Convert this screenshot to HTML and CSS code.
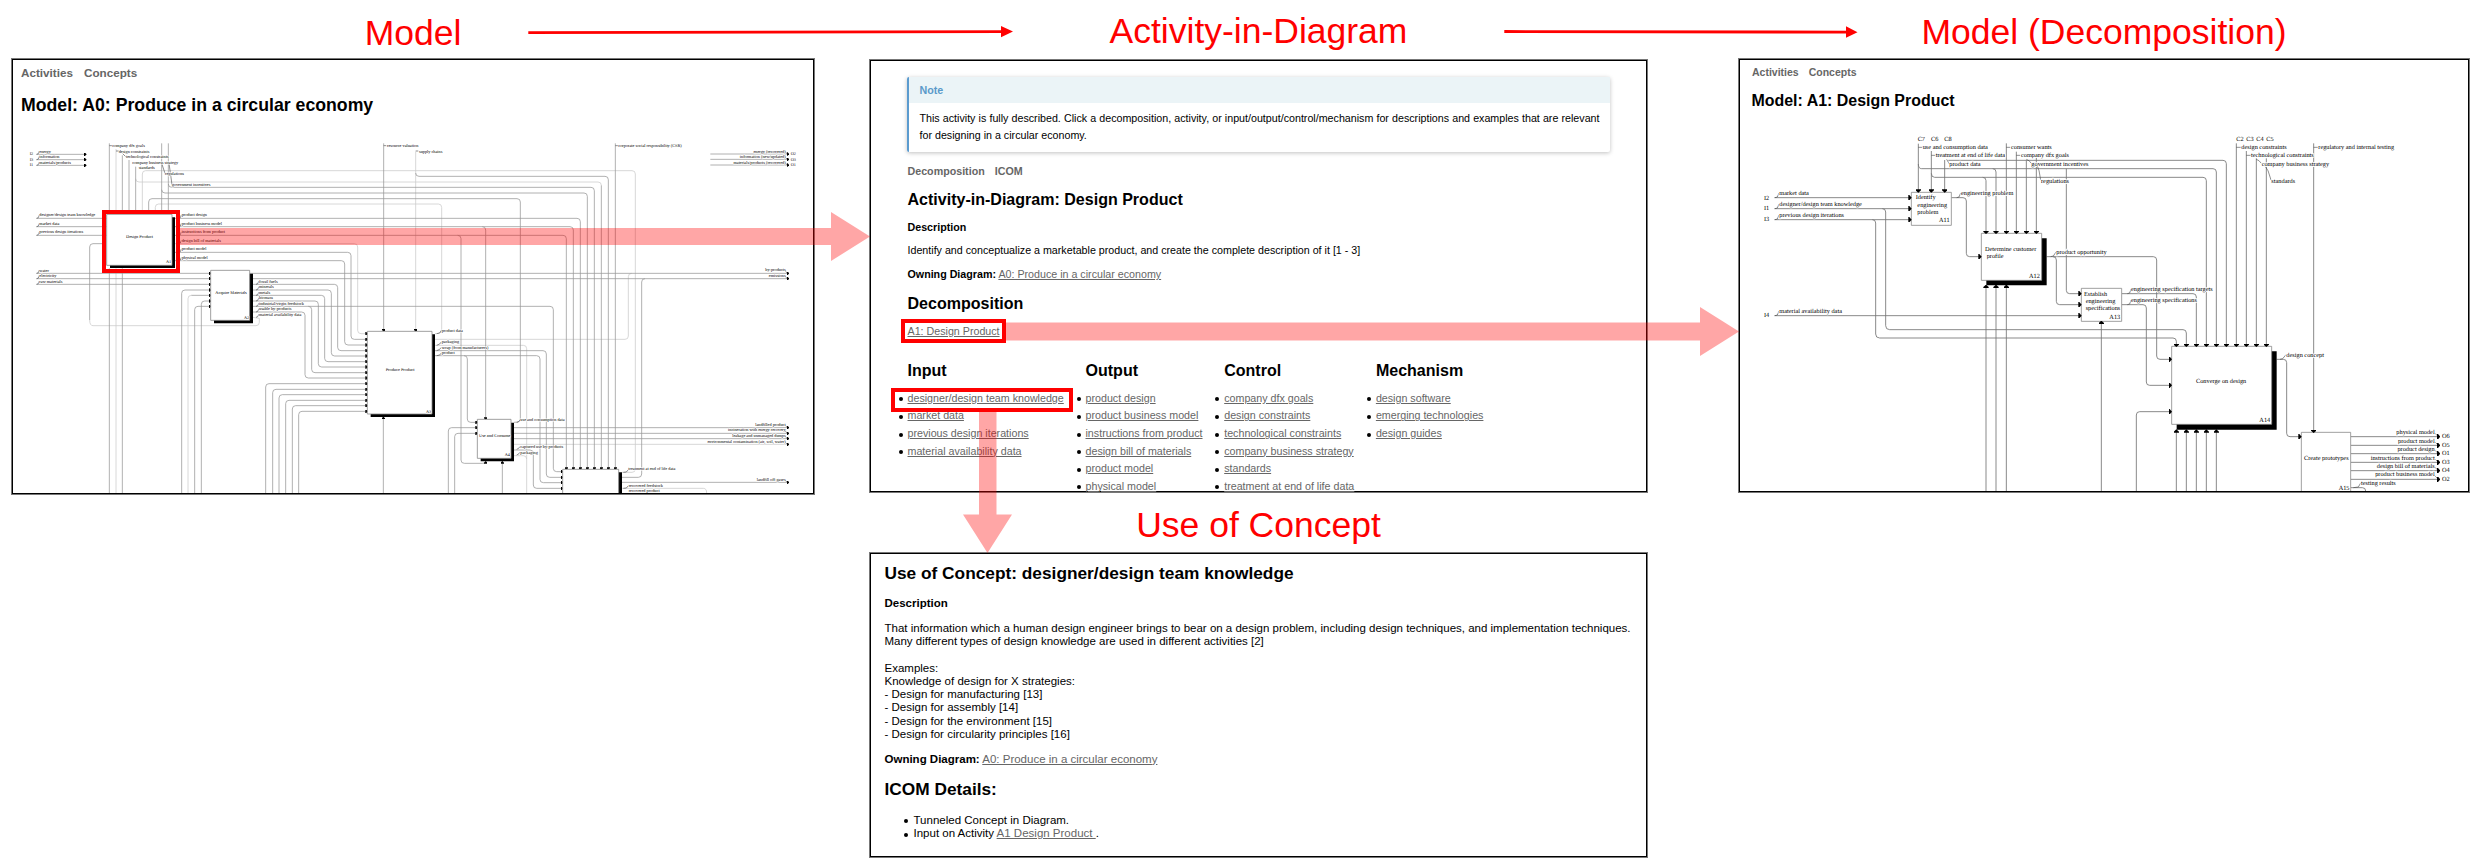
FILE: index.html
```html
<!DOCTYPE html>
<html lang="en">
<head>
<meta charset="utf-8">
<title>Model navigation</title>
<link rel="stylesheet" href="styles.css">
</head>
<body>
<main class="flow">
  <section class="col col-model">
    <h1 class="title">Model</h1>
    <div class="panel">
      <nav class="nav"><a>Activities</a><a>Concepts</a></nav>
      <h2 class="heading">Model: A0: Produce in a circular economy</h2>
      <svg class="diagram a0" viewBox="39 345 2400 1134">
        <defs>
          <marker id="h0" viewBox="0 0 8 10" refX="8" refY="5" markerWidth="8" markerHeight="10" markerUnits="userSpaceOnUse" orient="auto"><path class="solid" d="M0 0H3L8 5L3 10H0Z"/></marker>
        </defs>
        <g class="wire faint">
          <path d="M348 447V640M348 805V1479M1247 455V993"/>
          <path d="M427 640V522Q427 512 437 512H1896Q1906 512 1906 522V1407Q1906 1417 1896 1417H1866"/>
          <path d="M407 536Q407 546 417 546H1794Q1804 546 1804 556"/>
          <path d="M466 640V622Q466 612 476 612H1315Q1325 612 1325 622V991Q1325 1001 1305 1001"/>
          <path d="M1305 1018H1875Q1885 1018 1885 1008V830Q1885 820 1895 820"/>
          <path d="M1305 1036H1570Q1580 1036 1580 1046V1479"/>
          <path d="M1542 1367H1570Q1580 1367 1580 1377M1542 1333H2362"/>
          <path d="M269 960Q269 977 279 977H768Q778 977 778 967V955L758 952"/>
          <path d="M525 731H1063Q1073 731 1073 741V991Q1073 1001 1083 1001H1102"/>
          <path d="M564 1479V896Q564 886 574 886M1866 1465H2110Q2120 1465 2120 1479"/>
        </g>
        <g class="wire">
          <path d="M328 430V640M328 805V1479M367 466V640M367 805V1479M387 480V640M407 500V640M485 430V640M505 430V640M1151 430V993M1846 430V1405"/>
          <path d="M446 640V606Q446 596 456 596H1551Q1561 596 1561 606V1257Q1561 1267 1542 1267"/>
          <path d="M485 569Q485 579 495 579H1752Q1762 579 1762 589V1405"/>
          <path d="M505 552Q505 562 515 562H1773Q1783 562 1783 572V1405"/>
          <path d="M1247 519Q1247 529 1257 529H1815Q1825 529 1825 539V1405M1804 556V1405"/>
          <path d="M525 655H1731Q1741 655 1741 665V1405M525 680H1710Q1720 680 1720 690V1405M1447 680Q1457 680 1457 690V1258"/>
          <path d="M525 706H1689Q1699 706 1699 716V1405M1373 706Q1383 706 1383 716V1380Q1383 1390 1393 1390H1447Q1457 1390 1457 1386"/>
          <path d="M525 757H1043Q1053 757 1053 767V1008Q1053 1018 1063 1018H1102M525 782H1024Q1034 782 1034 792V1025Q1034 1035 1044 1035H1102"/>
          <path d="M306 731H279Q269 731 269 741V960M109 655H320M109 680H320M109 706H320"/>
          <path d="M749 820H2365M749 836H2365"/>
          <path d="M758 853H1003Q1013 853 1013 863V1042Q1013 1052 1023 1052H1102M758 870H984Q994 870 994 880V1058Q994 1068 1004 1068H1102M758 886H964Q974 886 974 896V1075Q974 1085 984 1085H1102M758 903H945Q955 903 955 913V1091Q955 1101 965 1101H1102M925 919Q935 919 935 929V1108Q935 1118 945 1118H1102M758 936H905Q915 936 915 946V1124Q915 1134 925 1134H1102"/>
          <path d="M758 919H1650Q1660 919 1660 929V1405Q1660 1415 1670 1415H1688"/>
          <path d="M1305 1052H1629Q1639 1052 1639 1062V1422Q1639 1432 1649 1432H1688M1305 1067H1610Q1620 1067 1620 1077V1438Q1620 1448 1630 1448H1688M1392 1067Q1402 1067 1402 1077V1257Q1402 1267 1412 1267H1432"/>
          <path d="M1542 1350H1590Q1600 1350 1600 1360V1455Q1600 1465 1610 1465H1688"/>
          <path d="M1542 1283H2362M1542 1300H2362M1542 1316H2362M1866 1447H2362M1866 1432H1915Q1925 1432 1925 1422V846Q1925 836 1935 836"/>
          <path d="M1150 1479V1251M1507 1479V1384M2131 462H2362M2131 478H2362M2131 495H2362"/>
          <path d="M545 1479V880Q545 870 555 870H632M574 886H632M584 1479V929Q584 919 594 919H632M604 1479V913Q604 903 614 903H632"/>
          <path d="M797 1479V1161Q797 1151 807 1151H1102M818 1479V1178Q818 1168 828 1168H1102M837 1479V1194Q837 1184 847 1184H1102M857 1479V1211Q857 1201 867 1201H1102M877 1479V1227Q877 1217 887 1217H1102M896 1479V1244Q896 1234 906 1234H1102"/>
          <path d="M1345 1479V1293Q1345 1283 1355 1283H1432M1364 1479V1310Q1364 1300 1374 1300H1432M109 463H255M109 479H255M109 496H255M109 820H632M109 836H632M109 853H632"/>
          <path class="tick" d="M110 463l5-2l3-8M110 479l5-2l3-8M110 496l5-2l3-8M110 655l5-2l3-8M110 680l5-2l3-8M110 706l5-2l3-8M110 820l5-2l3-8M110 836l5-2l3-8M110 853l5-2l3-8M536 655l5-2l3-8M536 680l5-2l3-8M536 706l5-2l3-8M536 731l5-2l3-8M536 757l5-2l3-8M536 782l5-2l3-8M768 853l5-2l4-8M768 870l5-2l4-8M768 886l5-2l4-8M768 903l5-2l4-8M768 919l5-2l4-8M768 936l5-2l4-8M768 952l5-2l4-8M1310 1001l9-2l5-8M1310 1036l9-4l5-6M1310 1052l9-4l5-6M1310 1067l9-2l5-6M1550 1267l5-1l5-6M1550 1348l7-4l4-5M1550 1365l7-4l4-5M328 437h8M348 453h8M367 460l10 10M485 490l10 30M507 490l9 64M1151 437h8M1247 453h8M1846 437h8M2354 453l8 9M2354 470l8 8M2354 487l8 8M2354 811l8 9M2354 828l8 8M2354 1274l8 9M2354 1291l8 9M2354 1308l8 8M2354 1325l8 8M2354 1440l8 7M1870 1417l9-1l6-7M1870 1465l9-1l6-7"/>
        </g>
        <g class="heads">
          <path class="hd" d="M250 463h10"/><path class="hd" d="M250 479h10"/><path class="hd" d="M250 496h10"/>
          <path class="hd" d="M624 820h10"/><path class="hd" d="M624 836h10"/><path class="hd" d="M624 853h10"/><path class="hd" d="M624 870h10"/><path class="hd" d="M624 886h10"/><path class="hd" d="M624 903h10"/><path class="hd" d="M624 919h10"/>
          <path class="hd" d="M1094 1001h10"/><path class="hd" d="M1094 1018h10"/><path class="hd" d="M1094 1035h10"/><path class="hd" d="M1094 1052h10"/><path class="hd" d="M1094 1068h10"/><path class="hd" d="M1094 1085h10"/><path class="hd" d="M1094 1101h10"/><path class="hd" d="M1094 1118h10"/><path class="hd" d="M1094 1134h10"/><path class="hd" d="M1094 1151h10"/><path class="hd" d="M1094 1168h10"/><path class="hd" d="M1094 1184h10"/><path class="hd" d="M1094 1201h10"/><path class="hd" d="M1094 1217h10"/><path class="hd" d="M1094 1234h10"/>
          <path class="hd" d="M1424 1267h10"/><path class="hd" d="M1424 1283h10"/><path class="hd" d="M1424 1300h10"/>
          <path class="hd" d="M1680 1415h10"/><path class="hd" d="M1680 1432h10"/><path class="hd" d="M1680 1448h10"/><path class="hd" d="M1680 1465h10"/>
          <path class="hd" d="M1151 985v10"/><path class="hd" d="M1247 985v10"/><path class="hd" d="M1457 1250v10"/>
          <path class="hd" d="M1150 1262v-12"/><path class="hd" d="M1457 1394v-11"/><path class="hd" d="M1507 1394v-11"/>
          <path class="hd" d="M1699 1400v10"/><path class="hd" d="M1720 1400v10"/><path class="hd" d="M1741 1400v10"/><path class="hd" d="M1762 1400v10"/><path class="hd" d="M1783 1400v10"/><path class="hd" d="M1804 1400v10"/><path class="hd" d="M1825 1400v10"/><path class="hd" d="M1846 1400v10"/>
          <path class="hd" d="M2358 462h10"/><path class="hd" d="M2358 478h10"/><path class="hd" d="M2358 495h10"/><path class="hd" d="M2358 820h10"/><path class="hd" d="M2358 836h10"/><path class="hd" d="M2358 1283h10"/><path class="hd" d="M2358 1300h10"/><path class="hd" d="M2358 1316h10"/><path class="hd" d="M2358 1333h10"/><path class="hd" d="M2358 1447h10"/>
        </g>
        <path class="solid" d="M330 652H525V804H330ZM642 821H759V970H642ZM1112 1003H1305V1251H1112ZM1442 1268H1542V1384H1442ZM1698 1417H1866V1500H1698Z"/>
        <path class="box" d="M320 643H516V796H320ZM632 811H749V961H632ZM1102 994H1296V1242H1102ZM1432 1258H1533V1375H1432ZM1688 1408H1856V1500H1688Z"/>
        <g class="labels">
          <text x="89" y="466">I2</text><text x="89" y="482">I3</text><text x="89" y="498">I1</text>
          <text x="118" y="458">energy</text><text x="118" y="474">information</text><text x="118" y="491">materials/products</text>
          <text x="337" y="441">company dfx goals</text><text x="356" y="458">design constraints</text><text x="378" y="474">technological constraints</text><text x="397" y="491">company business strategy</text><text x="416" y="507">standards</text><text x="495" y="524">regulations</text><text x="515" y="557">government incentives</text>
          <text x="118" y="649">designer/design team knowledge</text><text x="118" y="675">market data</text><text x="118" y="700">previous design iterations</text>
          <text x="545" y="649">product design</text><text x="545" y="675">product business model</text><text x="545" y="700">instructions from product</text><text x="545" y="726">design bill of materials</text><text x="545" y="751">product model</text><text x="545" y="777">physical model</text>
          <text x="118" y="815">water</text><text x="118" y="831">electricity</text><text x="118" y="848">raw materials</text>
          <text x="777" y="848">fossil fuels</text><text x="777" y="864">minerals</text><text x="777" y="881">metals</text><text x="777" y="897">biomass</text><text x="777" y="914">industrial/virgin feedstock</text><text x="777" y="930">usable by-products</text><text x="777" y="947">material availability data</text>
          <text x="1161" y="441">resource valuation</text><text x="1257" y="458">supply chains</text><text x="1855" y="441">corporate social responsibility (CSR)</text>
          <text x="1325" y="996">product data</text><text x="1325" y="1030">packaging</text><text x="1325" y="1046">scrap (from manufacturers)</text><text x="1325" y="1063">product</text>
          <text x="1561" y="1262">use and consumption data</text><text x="1561" y="1345">captured use by-products</text><text x="1561" y="1361">packaging</text>
          <text x="1885" y="1410">treatment at end of life data</text><text x="1886" y="1460">recovered feedstock</text><text x="1886" y="1476">recovered product</text>
          <text x="378" y="715" class="name">Design Product</text><text x="498" y="789">A1</text>
          <text x="646" y="882" class="name">Acquire Materials</text><text x="732" y="956">A2</text>
          <text x="1157" y="1114" class="name">Produce Product</text><text x="1278" y="1238">A3</text>
          <text x="1437" y="1312" class="name">Use and Consume</text><text x="1514" y="1369">A4</text>
          <text x="2372" y="466">O2</text><text x="2372" y="482">O3</text><text x="2372" y="498">O1</text>
        </g>
        <g class="labels end">
          <text x="2357" y="458">energy (recovered)</text><text x="2357" y="474">information (new/updated)</text><text x="2357" y="491">materials/products (recovered)</text>
          <text x="2357" y="814">by-products</text><text x="2357" y="831">emissions</text>
          <text x="2357" y="1278">landfilled product</text><text x="2357" y="1294">incineration with energy recovery</text><text x="2357" y="1311">leakage and unmanaged dumps</text><text x="2357" y="1328">environmental contamination (air, soil, water)</text><text x="2357" y="1443">landfill off-gases</text>
        </g>
      </svg>
    </div>
  </section>

  <section class="col col-activity">
    <h1 class="title">Activity-in-Diagram</h1>
    <div class="panel">
      <aside class="note">
        <div class="note-head">Note</div>
        <p class="note-body">This activity is fully described. Click a decomposition, activity, or input/output/control/mechanism for descriptions and examples that are relevant for designing in a circular economy.</p>
      </aside>
      <nav class="nav"><a>Decomposition</a><a>ICOM</a></nav>
      <h2 class="heading">Activity-in-Diagram: Design Product</h2>
      <h3 class="sub">Description</h3>
      <p class="para">Identify and conceptualize a marketable product, and create the complete description of it [1 - 3]</p>
      <p class="para owning"><b>Owning Diagram:</b> <a class="link">A0: Produce in a circular economy</a></p>
      <h2 class="heading">Decomposition</h2>
      <p class="para decomp"><a class="link">A1: Design Product</a></p>
      <div class="icom">
        <div><h2 class="heading">Input</h2><ul><li><a class="link">designer/design team knowledge</a></li><li><a class="link">market data</a></li><li><a class="link">previous design iterations</a></li><li><a class="link">material availability data</a></li></ul></div>
        <div><h2 class="heading">Output</h2><ul><li><a class="link">product design</a></li><li><a class="link">product business model</a></li><li><a class="link">instructions from product</a></li><li><a class="link">design bill of materials</a></li><li><a class="link">product model</a></li><li><a class="link">physical model</a></li></ul></div>
        <div><h2 class="heading">Control</h2><ul><li><a class="link">company dfx goals</a></li><li><a class="link">design constraints</a></li><li><a class="link">technological constraints</a></li><li><a class="link">company business strategy</a></li><li><a class="link">standards</a></li><li><a class="link">treatment at end of life data</a></li></ul></div>
        <div><h2 class="heading">Mechanism</h2><ul><li><a class="link">design software</a></li><li><a class="link">emerging technologies</a></li><li><a class="link">design guides</a></li></ul></div>
      </div>
    </div>
    <h1 class="title title-concept">Use of Concept</h1>
    <div class="panel panel-concept">
      <h2 class="heading">Use of Concept: designer/design team knowledge</h2>
      <h3 class="sub">Description</h3>
      <p class="para text">That information which a human design engineer brings to bear on a design problem, including design techniques, and implementation techniques.<br>Many different types of design knowledge are used in different activities [2]<br><br>Examples:<br>Knowledge of design for X strategies:<br>- Design for manufacturing [13]<br>- Design for assembly [14]<br>- Design for the environment [15]<br>- Design for circularity principles [16]</p>
      <p class="para owner"><b>Owning Diagram:</b> <a class="link">A0: Produce in a circular economy</a></p>
      <h2 class="heading details">ICOM Details:</h2>
      <ul><li>Tunneled Concept in Diagram.</li><li>Input on Activity <a class="link">A1 Design Product&nbsp;</a>.</li></ul>
    </div>
  </section>

  <section class="col col-decomp">
    <h1 class="title">Model (Decomposition)</h1>
    <div class="panel">
      <nav class="nav"><a>Activities</a><a>Concepts</a></nav>
      <h2 class="heading">Model: A1: Design Product</h2>
      <svg class="diagram a1" viewBox="30 -27 2184 1140">
        <defs>
          <marker id="h1" viewBox="0 0 10 16" refX="10" refY="8" markerWidth="10" markerHeight="16" markerUnits="userSpaceOnUse" orient="auto"><path class="solid" d="M0 0H3L10 8L3 16H0Z"/></marker>
        </defs>
        <g class="wire">
          <path d="M565 71V216M604 93V216M644 120V216M829 70V340M859 95V340M919 105V340"/>
          <path d="M565 132Q565 146 575 146H1449Q1459 146 1459 156V679M788 146Q798 146 798 156V340"/>
          <path d="M604 160Q604 172 614 172H1419Q1429 172 1429 182V679M758 172Q768 172 768 182V340"/>
          <path d="M655 121H1479Q1489 121 1489 131V679M889 121V340M1009 146V511Q1009 521 1019 521H1054"/>
          <path d="M133 233H544M133 266H544M133 299H544M133 587H1054"/>
          <path d="M457 266Q467 266 467 276V617Q467 629 479 629H1359Q1369 629 1369 639V679"/>
          <path d="M427 299Q437 299 437 309V642Q437 654 449 654H1329Q1339 654 1339 664V679"/>
          <path d="M664 233H699Q709 233 709 243V400Q709 410 719 410H754"/>
          <path d="M768 1113V496M798 1113V496M829 1113V496M1114 1113V604"/>
          <path d="M950 410H1270Q1280 410 1280 420V708Q1280 718 1290 718H1325M969 410Q979 410 979 420V544Q979 554 989 554H1054"/>
          <path d="M1175 521H1389Q1399 521 1399 531V679M1175 554H1239Q1249 554 1249 564V786Q1249 796 1259 796H1325"/>
          <path d="M1219 1113V885Q1219 875 1229 875H1325M1339 1113V929M1369 1113V929M1399 1113V929M1429 1113V929M1459 1113V929"/>
          <path d="M1519 70V679M1549 93V679M1579 115V679M1609 115V679M1751 70V938"/>
          <path d="M1640 718H1660Q1670 718 1670 728V940Q1670 950 1680 950H1714"/>
          <path d="M1862 950H2128M1862 976H2128M1862 1001H2128M1862 1027H2128M1862 1052H2128M1862 1078H2128M1862 1103H1897Q1907 1103 1907 1113"/>
          <path class="tick" d="M135 233l7-2l5-12M135 266l7-2l5-12M135 299l7-2l5-12M135 587l7-2l5-12M680 233l7-2l5-12M962 410l8-2l8-12M1192 521l7-2l4-12M1192 554l7-2l4-12M1650 718l8-2l10-12M1870 1103l15-2l7-12M565 82h12M604 106h12M650 118l8 14M829 82h12M859 106h12M889 118q8 2 15 12M919 130q10 20 13 50M1519 82h14M1549 106h14M1579 118q8 2 15 12M1600 130q17 20 23 50M1751 82h14M2113 938l12 12M2113 964l12 12M2113 989l12 12M2113 1015l12 12M2113 1040l12 12M2113 1066l12 12"/>
        </g>
        <path class="solid" d="M769 355H950V496H769ZM1340 694H1640V929H1340Z"/>
        <path class="box" d="M544 217H664V316H544ZM754 340H935V481H754ZM1054 505H1175V604H1054ZM1325 679H1625V913H1325ZM1714 937H1862V1130H1714Z"/>
        <g class="heads">
          <path class="hd" d="M565 205v13"/><path class="hd" d="M604 205v13"/><path class="hd" d="M644 205v13"/>
          <path class="hd" d="M532 233h13"/><path class="hd" d="M532 266h13"/><path class="hd" d="M532 299h13"/>
          <path class="hd" d="M768 329v13"/><path class="hd" d="M798 329v13"/><path class="hd" d="M829 329v13"/><path class="hd" d="M859 329v13"/><path class="hd" d="M889 329v13"/><path class="hd" d="M919 329v13"/>
          <path class="hd" d="M742 410h13"/><path class="hd" d="M1042 521h13"/><path class="hd" d="M1042 554h13"/><path class="hd" d="M1042 587h13"/>
          <path class="hd" d="M768 507v-13"/><path class="hd" d="M798 507v-13"/><path class="hd" d="M829 507v-13"/><path class="hd" d="M1114 615v-13"/>
          <path class="hd" d="M1339 668v13"/><path class="hd" d="M1369 668v13"/><path class="hd" d="M1399 668v13"/><path class="hd" d="M1429 668v13"/><path class="hd" d="M1459 668v13"/><path class="hd" d="M1489 668v13"/><path class="hd" d="M1519 668v13"/><path class="hd" d="M1549 668v13"/><path class="hd" d="M1579 668v13"/><path class="hd" d="M1609 668v13"/>
          <path class="hd" d="M1313 718h13"/><path class="hd" d="M1313 796h13"/><path class="hd" d="M1313 875h13"/>
          <path class="hd" d="M1339 941v-13"/><path class="hd" d="M1369 941v-13"/><path class="hd" d="M1399 941v-13"/><path class="hd" d="M1429 941v-13"/><path class="hd" d="M1459 941v-13"/>
          <path class="hd" d="M1751 926v13"/><path class="hd" d="M1702 950h13"/>
          <path class="hd" d="M2118 950h13"/><path class="hd" d="M2118 976h13"/><path class="hd" d="M2118 1001h13"/><path class="hd" d="M2118 1027h13"/><path class="hd" d="M2118 1052h13"/><path class="hd" d="M2118 1078h13"/>
        </g>
        <g class="labels">
          <text x="563" y="62">C7</text><text x="603" y="62">C6</text><text x="643" y="62">C8</text>
          <text x="1519" y="62">C2</text><text x="1549" y="62">C3</text><text x="1579" y="62">C4</text><text x="1609" y="62">C5</text>
          <text x="102" y="239">I2</text><text x="102" y="271">I1</text><text x="102" y="304">I3</text><text x="102" y="592">I4</text>
          <text x="578" y="87">use and consumption data</text><text x="617" y="111">treatment at end of life data</text><text x="658" y="137">product data</text>
          <text x="843" y="87">consumer wants</text><text x="873" y="111">company dfx goals</text><text x="904" y="137">government incentives</text><text x="933" y="188">regulations</text>
          <text x="148" y="224">market data</text><text x="148" y="258">designer/design team knowledge</text><text x="148" y="291">previous design iterations</text><text x="148" y="579">material availability data</text>
          <text x="693" y="225">engineering problem</text><text x="979" y="402">product opportunity</text>
          <text x="1203" y="514">engineering specification targets</text><text x="1203" y="547">engineering specifications</text>
          <text x="1534" y="87">design constraints</text><text x="1563" y="111">technological constraints</text><text x="1595" y="137">company business strategy</text><text x="1624" y="188">standards</text><text x="1765" y="87">regulatory and internal testing</text>
          <text x="1669" y="710">design concept</text><text x="1893" y="1095">testing results</text>
          <text x="557" y="238">Identify</text><text x="562" y="260">engineering</text><text x="562" y="281">problem</text><text x="627" y="307">A11</text>
          <text x="765" y="394">Determine customer</text><text x="770" y="415">profile</text><text x="897" y="473">A12</text>
          <text x="1062" y="527">Establish</text><text x="1067" y="548">engineering</text><text x="1067" y="570">specifications</text><text x="1138" y="596">A13</text>
          <text x="1398" y="790">Converge on design</text><text x="1588" y="905">A14</text>
          <text x="1722" y="1020">Create prototypes</text><text x="1826" y="1109">A15</text>
          <text x="2136" y="955">O6</text><text x="2136" y="981">O5</text><text x="2136" y="1006">O1</text><text x="2136" y="1031">O3</text><text x="2136" y="1057">O4</text><text x="2136" y="1082">O2</text>
        </g>
        <g class="labels end">
          <text x="2114" y="943">physical model</text><text x="2114" y="968">product model</text><text x="2114" y="994">product design</text><text x="2114" y="1019">instructions from product</text><text x="2114" y="1043">design bill of materials</text><text x="2114" y="1069">product business model</text>
        </g>
      </svg>
    </div>
  </section>
</main>

<svg class="overlay" viewBox="0 0 2482 866">
  <g class="trail">
    <path d="M180 228H831V212L870 236.5L831 261V245H180Z"/>
    <path d="M1006 322.5H1700V307L1739 331.5L1700 356V340.5H1006Z"/>
    <path d="M979 412H996.5V514.5H1012L987.5 553L963 514.5H979Z"/>
  </g>
  <g class="frames">
    <rect x="104" y="212" width="74" height="59"/>
    <rect x="903" y="321" width="101" height="20"/>
    <rect x="893" y="390" width="178" height="20"/>
  </g>
  <g class="arrows">
    <path d="M528.3 32.7L1002 31.7M1504.3 31.5L1847 32.1"/>
    <path class="tip" d="M1001 26V37.3L1013 31.6ZM1846 26.3V37.8L1857.5 32.2Z"/>
  </g>
</svg>
</body>
</html>
```
FILE: styles.css
```css
* { box-sizing: border-box; }

body {
  margin: 0;
  position: relative;
  width: 2482px;
  height: 866px;
  overflow: hidden;
  background: #fff;
  color: #000;
  font-family: "Liberation Sans", Arial, sans-serif;
}

h1, h2, h3, p, ul { margin: 0; padding: 0; }

.flow {
  display: grid;
  grid-template-columns: 804px 779px 732px;
  column-gap: 54px;
  padding-left: 11px;
}

.col { display: flex; flex-direction: column; }

.title {
  height: 58px;
  padding-top: 13px;
  font-size: 35.5px;
  font-weight: 400;
  line-height: 40px;
  text-align: center;
  color: #f00;
}

.panel {
  display: flex;
  flex-direction: column;
  height: 437px;
  border: 1px solid #777;
  box-shadow: inset 0 0 0 1px #000;
  padding: 1px;
  overflow: hidden;
}

.nav {
  display: flex;
  line-height: 16px;
  font-weight: 700;
  color: #666;
}

.heading { line-height: 20px; font-weight: 700; }
.sub { font-size: inherit; }
.link { color: #666; text-decoration: underline; }

/* Model column */
.col-model .nav { margin: 5px 0 0 8px; gap: 11px; font-size: 11.7px; }
.col-model .heading { margin: 13.5px 0 0 8px; font-size: 17.7px; }

/* Activity column */
.col-activity > .title { height: 59px; padding-top: 11px; }
.col-activity .panel { height: 434px; padding-left: 37.5px; font-size: 10.7px; line-height: 16px; }
.col-activity .heading { font-size: 16.05px; }

.note {
  width: 703px;
  margin: 16px 0 0 -1px;
  border-left: 2px solid #5b9bcf;
  border-radius: 2px;
  box-shadow: 0 1px 4px rgba(0, 0, 0, .25);
}
.note-head {
  padding-left: 11px;
  background: #ebf4f7;
  line-height: 26px;
  font-weight: 700;
  color: #5a9aca;
}
.note-body {
  padding: 6.6px 10px 7.4px 11px;
  line-height: 17.57px;
  text-align: justify;
}

.col-activity .nav { margin-top: 11px; gap: 10px; }
.col-activity .nav + .heading { margin-top: 10px; }
.col-activity .sub { margin-top: 10px; }
.col-activity .para { margin-top: 7px; }
.col-activity .owning { margin-top: 8px; }
.col-activity .para + .heading { margin-top: 11px; }
.col-activity .decomp { margin-top: 10px; }

.icom {
  display: grid;
  grid-template-columns: 178px 138.7px 151.7px 1fr;
  margin-top: 21px;
}
ul { list-style: none; }
li { position: relative; }
li::before {
  content: "";
  position: absolute;
  left: -9px;
  top: 7.5px;
  width: 4px;
  height: 4px;
  border-radius: 50%;
  background: #000;
}
.icom ul { margin-top: 9.8px; line-height: 17.57px; white-space: nowrap; }

/* Concept panel */
.col-activity > .title-concept { height: 48px; margin-top: 11px; padding-top: 1px; }
.col-activity .panel-concept {
  height: 306px;
  padding-left: 14.5px;
  margin-top: 0;
  font-size: 11.5px;
  line-height: 13.2px;
}
.panel-concept .heading { margin-top: 9px; font-size: 17.3px; }
.panel-concept .sub { margin-top: 14px; }
.panel-concept .text { margin-top: 12px; white-space: nowrap; }
.panel-concept .owner { margin-top: 11.6px; }
.col-activity .panel-concept .details { margin-top: 13px; }
.panel-concept ul { margin: 15px 0 0 29px; }
.panel-concept li::before { left: -10px; top: 5.5px; }

/* Decomposition column */
.col-decomp { margin-left: 36px; width: 732px; }
.col-decomp > .title { padding-top: 12px; }
.col-decomp .panel { height: 435px; }
.col-decomp .nav { margin: 4px 0 0 12px; gap: 10px; font-size: 10.5px; }
.col-decomp .heading { margin: 10.5px 0 0 11.5px; font-size: 15.95px; }

/* Diagrams */
.diagram { display: block; flex: none; overflow: hidden; text-rendering: geometricPrecision; }
.a0 { width: 800px; height: 378px; margin-top: .5px; }
.a1 { width: 728px; height: 380px; margin-top: .5px; }

.wire { fill: none; stroke: #999; stroke-width: 2.3; }
.a1 .wire { stroke: #777; stroke-width: 2.6; }
.a0 .faint { stroke: #ccc; }
.tick { stroke: #444; stroke-width: 1.8; }
.solid { fill: #000; }
.box { fill: #fff; stroke: #888; stroke-width: 2.4; }
.hd { fill: none; stroke: none; }
.a0 .hd { marker-end: url(#h0); }
.a1 .hd { marker-end: url(#h1); }

.labels {
  font-family: "Liberation Serif", "Times New Roman", serif;
  fill: #000;
  stroke: #fff;
  stroke-width: 5px;
  stroke-linejoin: round;
  paint-order: stroke;
}
.a0 .labels { font-size: 12.8px; stroke-width: 3px; }
.a0 .name { font-size: 13px; }
.a1 .labels { font-size: 18.9px; }
.end { text-anchor: end; }

/* Annotations over the panels */
.overlay { position: absolute; left: 0; top: 0; width: 2482px; height: 866px; pointer-events: none; }
.trail { fill: #f00; fill-opacity: .35; }
.frames { fill: none; stroke: #f00; stroke-width: 4; }
.arrows { fill: none; stroke: #f00; stroke-width: 2.8; }
.tip { fill: #f00; stroke: none; }
```
